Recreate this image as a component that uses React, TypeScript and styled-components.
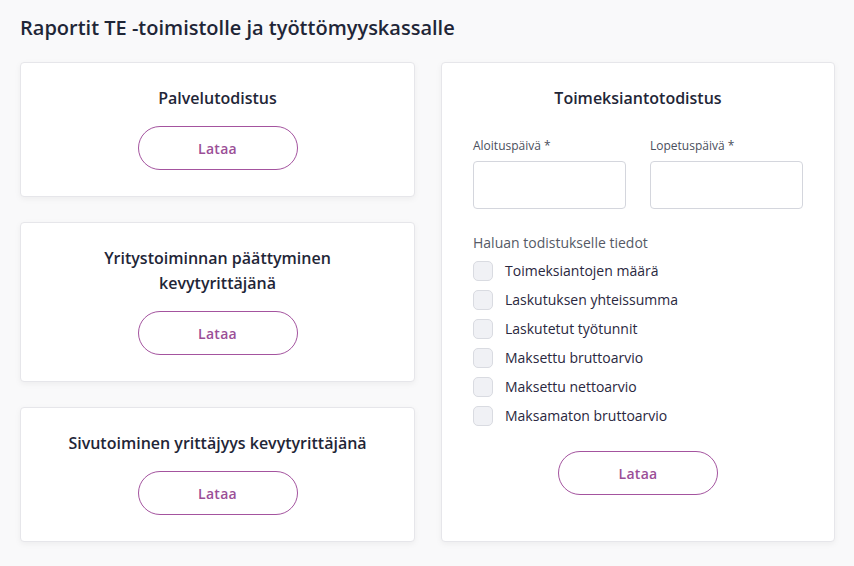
import React from 'react';
import styled, { createGlobalStyle } from 'styled-components';

const GlobalStyle = createGlobalStyle`
  html, body {
    margin: 0;
    padding: 0;
    background: #f9f9fa;
    font-family: "Open Sans", "Liberation Sans", sans-serif;
    color: #1f2637;
  }
`;

const Page = styled.div`
  padding: 14px 19px 24px 20px;
`;

const Heading = styled.h1`
  margin: 0 0 20px;
  font-size: 20px;
  line-height: 28px;
  font-weight: 600;
  color: #1f2637;
`;

const Columns = styled.div`
  display: grid;
  grid-template-columns: 395px 394px;
  column-gap: 26px;
  align-items: start;
`;

const Stack = styled.div`
  display: flex;
  flex-direction: column;
  gap: 25px;
`;

const Card = styled.section<{ $tall?: boolean }>`
  background: #fff;
  border: 1px solid #e6e6ea;
  border-radius: 4px;
  box-shadow: 0 2px 6px rgba(0, 0, 0, 0.05);
  padding: ${(p) => (p.$tall ? '23px 31px 46px' : '23px 31px 26px')};
  display: flex;
  flex-direction: column;
  align-items: center;
  box-sizing: border-box;
`;

const CardTitle = styled.h2`
  margin: 0;
  font-size: 16px;
  line-height: 25px;
  font-weight: 600;
  text-align: center;
  color: #1f2637;
`;

const LoadButton = styled.button<{ $top?: number }>`
  margin-top: ${(p) => p.$top ?? 15}px;
  width: 160px;
  height: 44px;
  border: 1px solid #a4549f;
  border-radius: 23px;
  background: #fff;
  color: #9b4f97;
  font-family: "Open Sans", "Liberation Sans", sans-serif;
  font-size: 14px;
  font-weight: 600;
  letter-spacing: 0.3px;
  cursor: pointer;
`;

const DateRow = styled.div`
  margin-top: 27px;
  width: 100%;
  display: grid;
  grid-template-columns: 1fr 1fr;
  column-gap: 24px;
`;

const Field = styled.label`
  display: flex;
  flex-direction: column;
  gap: 7px;
  font-size: 12px;
  line-height: 16px;
  color: #4a4f5c;
`;

const DateInput = styled.input`
  box-sizing: border-box;
  width: 100%;
  height: 48px;
  border: 1px solid #d4d6dd;
  border-radius: 4px;
  background: #fff;
  font-family: inherit;
`;

const Options = styled.div`
  margin-top: 24px;
  width: 100%;
  display: flex;
  flex-direction: column;
`;

const OptionsLabel = styled.div`
  font-size: 14px;
  line-height: 20px;
  color: #555a66;
  margin-bottom: 3px;
`;

const OptionRow = styled.label`
  display: flex;
  align-items: center;
  gap: 12px;
  height: 29px;
  font-size: 14px;
  color: #2a2840;
`;

const Box = styled.span`
  width: 18px;
  height: 18px;
  border: 1px solid #d9dbe1;
  border-radius: 5px;
  background: #f0f1f5;
  flex-shrink: 0;
`;

const options = [
  'Toimeksiantojen määrä',
  'Laskutuksen yhteissumma',
  'Laskutetut työtunnit',
  'Maksettu bruttoarvio',
  'Maksettu nettoarvio',
  'Maksamaton bruttoarvio',
];

export default function App() {
  return (
    <>
      <GlobalStyle />
      <Page>
        <Heading>Raportit TE -toimistolle ja työttömyyskassalle</Heading>
        <Columns>
          <Stack>
            <Card>
              <CardTitle>Palvelutodistus</CardTitle>
              <LoadButton>Lataa</LoadButton>
            </Card>
            <Card>
              <CardTitle>
                Yritystoiminnan päättyminen
                <br />
                kevytyrittäjänä
              </CardTitle>
              <LoadButton>Lataa</LoadButton>
            </Card>
            <Card>
              <CardTitle>Sivutoiminen yrittäjyys kevytyrittäjänä</CardTitle>
              <LoadButton>Lataa</LoadButton>
            </Card>
          </Stack>
          <Card $tall>
            <CardTitle>Toimeksiantotodistus</CardTitle>
            <DateRow>
              <Field>
                Aloituspäivä *
                <DateInput />
              </Field>
              <Field>
                Lopetuspäivä *
                <DateInput />
              </Field>
            </DateRow>
            <Options>
              <OptionsLabel>Haluan todistukselle tiedot</OptionsLabel>
              {options.map((o) => (
                <OptionRow key={o}>
                  <Box />
                  {o}
                </OptionRow>
              ))}
            </Options>
            <LoadButton $top={21}>Lataa</LoadButton>
          </Card>
        </Columns>
      </Page>
    </>
  );
}
